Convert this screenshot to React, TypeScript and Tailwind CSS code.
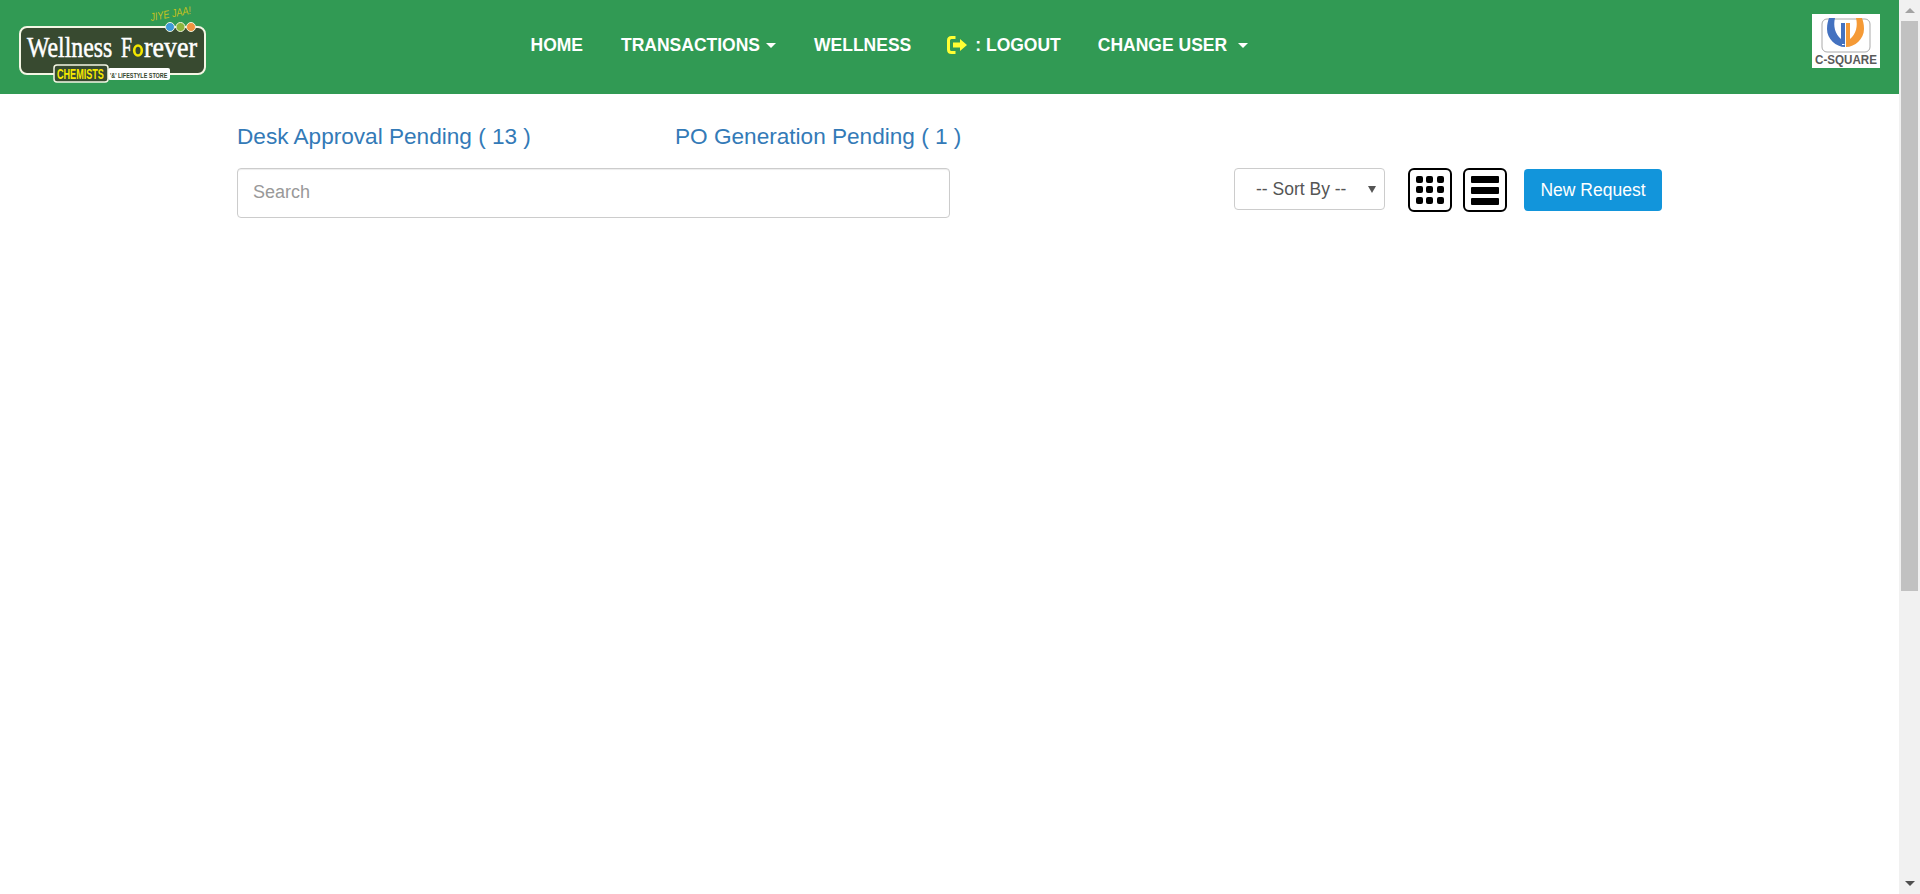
const pageFont = 'font-["Liberation_Sans",Arial,sans-serif]';

const WellnessLogo = () => (
  <svg width="220" height="94" viewBox="0 0 220 94" className="shrink-0">
    <text transform="translate(151 21) rotate(-10) scale(0.83 1)" fontFamily="Liberation Sans" fontStyle="italic" fontSize="11" fill="#c9c21e">JIYE JAA!</text>
    <rect x="20" y="27" width="185" height="47" rx="7" fill="#384a30" stroke="#f4f6e4" strokeWidth="2" />
    <circle cx="170" cy="27" r="4.5" fill="#3d9ad9" stroke="#eef2dd" />
    <circle cx="180.5" cy="27" r="4.5" fill="#8db53c" stroke="#eef2dd" />
    <circle cx="191" cy="27" r="4.5" fill="#f0933f" stroke="#eef2dd" />
    <text transform="translate(27 57) scale(0.82 1)" fontFamily="Liberation Serif" fontSize="29" fill="#fff" stroke="#fff" strokeWidth="0.5">Wellness</text>
    <text transform="translate(121 57) scale(0.68 1)" fontFamily="Liberation Serif" fontSize="29" fill="#fff" stroke="#fff" strokeWidth="0.5">F</text>
    <ellipse cx="138" cy="50.5" rx="3.8" ry="5" fill="#384a30" stroke="#f3e600" strokeWidth="2.6" />
    <text transform="translate(144 57) scale(0.89 1)" fontFamily="Liberation Serif" fontSize="29" fill="#fff" stroke="#fff" strokeWidth="0.5">rever</text>
    <rect x="108" y="68" width="62" height="12" rx="2" fill="#fff" />
    <text transform="translate(110 77.5) scale(0.68 1)" fontFamily="Liberation Sans" fontWeight="bold" fontSize="8" fill="#36462d">'&' LIFESTYLE STORE</text>
    <rect x="54" y="65" width="54" height="17" rx="3" fill="#384a30" stroke="#f4f6e4" strokeWidth="1.5" />
    <text transform="translate(57 79) scale(0.606 1)" fontFamily="Liberation Sans" fontWeight="bold" fontSize="15" fill="#f5e900">CHEMISTS</text>
  </svg>
);

const CsquareLogo = () => (
  <svg width="68" height="54" viewBox="0 0 68 54" className="bg-white shrink-0">
    <rect x="10" y="5" width="48" height="33" rx="5" fill="none" stroke="#a9a9a9" strokeWidth="1" />
    <path d="M17 4 H23 C21 12 23 20 29 25 L29 9 L33 9 L33 33 C24 33 15 25 15 15 C15 10 16 7 17 4 Z" fill="#4472c0" />
    <path d="M50 4 H44 C46 12 44 20 38 25 L38 9 L34 9 L34 33 C43 33 52 25 52 15 C52 10 51 7 50 4 Z" fill="#f59a36" />
    <rect x="30" y="30" width="2.5" height="1" fill="#fff" />
    <text transform="translate(3 50) scale(0.93 1)" fontFamily="Liberation Sans" fontWeight="bold" fontSize="12.5" fill="#5a5a5a">C-SQUARE</text>
  </svg>
);

const LogoutIcon = () => (
  <svg width="20" height="18" viewBox="0 0 20 18" fill="none">
    <path d="M8.5 1.5 H4.5 Q1.5 1.5 1.5 4.5 V13.5 Q1.5 16.5 4.5 16.5 H8.5" stroke="#ffff33" strokeWidth="3" />
    <path d="M6 6.5 H13 V3 L20 9 L13 15 V11.5 H6 Z" fill="#ffff33" />
  </svg>
);

const Caret = () => (
  <span className="inline-block w-0 h-0 border-x-[5px] border-t-[5px] border-x-transparent border-t-white" />
);

const GridButton = () => (
  <button className="w-11 h-11 rounded-md border-2 border-black bg-white grid grid-cols-3 gap-[3px] p-[6px] place-items-center">
    {Array.from({ length: 9 }).map((_, i) => (
      <span key={i} className="w-[7px] h-[7px] rounded-[2px] bg-black" />
    ))}
  </button>
);

const ListButton = () => (
  <button className="w-11 h-11 rounded-md border-2 border-black bg-white flex flex-col gap-1 px-[6px] justify-center items-stretch">
    <span className="h-[7px] rounded-[1px] bg-black" />
    <span className="h-[7px] rounded-[1px] bg-black" />
    <span className="h-[7px] rounded-[1px] bg-black" />
  </button>
);

export default function App() {
  return (
    <div className={`flex h-screen overflow-hidden bg-white ${pageFont}`}>
      <div className="flex-1 min-w-0">
        <header className="h-[94px] bg-[#319a54] flex items-center pr-[19px]">
          <WellnessLogo />
          <nav className="ml-[310.5px] flex items-center gap-[38px] text-[17.5px] font-bold text-white -mt-[4px]">
            <a>HOME</a>
            <a className="flex items-center gap-[6px]">TRANSACTIONS <Caret /></a>
            <a>WELLNESS</a>
            <a className="flex items-center gap-2 -ml-[2px]">
              <LogoutIcon /> : LOGOUT
            </a>
            <a className="flex items-center gap-[11px] -ml-px">CHANGE USER <Caret /></a>
          </nav>
          <div className="ml-auto mb-[12px]">
            <CsquareLogo />
          </div>
        </header>

        <main className="pl-[237px] w-[1662px]">
          <div className="flex pt-[28px] text-[22.6px] leading-[29px] text-[#337ab7]">
            <a className="w-[438px]">Desk Approval Pending ( 13 )</a>
            <a>PO Generation Pending ( 1 )</a>
          </div>
          <div className="flex items-start mt-[17px]">
            <input
              placeholder="Search"
              className="w-[713px] h-[50px] px-[15px] pb-[2px] text-[18px] text-[#555] placeholder:text-[#999] border border-[#ccc] rounded-[4px] shadow-[inset_0_1px_1px_rgba(0,0,0,0.075)] outline-none"
            />
            <div className="relative ml-[284px] w-[151px] h-[42px] flex items-center border border-[#ccc] rounded-[4px] pl-[21px] text-[17.5px] text-[#555]">
              -- Sort By --
              <span className="absolute right-[8px] top-[17px] w-0 h-0 border-x-[4px] border-t-[7px] border-x-transparent border-t-[#555]" />
            </div>
            <div className="ml-[23px]"><GridButton /></div>
            <div className="ml-[11px]"><ListButton /></div>
            <button className="ml-[17px] mt-px w-[138px] h-[42px] rounded-[4px] bg-[#1295db] text-white text-[17.5px]">New Request</button>
          </div>
        </main>
      </div>

      <div className="w-[21px] shrink-0 bg-[#f1f1f1] flex flex-col items-center">
        <div className="h-[21px] flex items-center justify-center">
          <span className="w-0 h-0 border-x-[5px] border-b-[5px] border-x-transparent border-b-[#a3a3a3]" />
        </div>
        <div className="w-[17px] h-[570px] bg-[#c1c1c1]" />
        <div className="mt-auto h-[21px] flex items-center justify-center">
          <span className="w-0 h-0 border-x-[5px] border-t-[5px] border-x-transparent border-t-[#505050]" />
        </div>
      </div>
    </div>
  );
}
